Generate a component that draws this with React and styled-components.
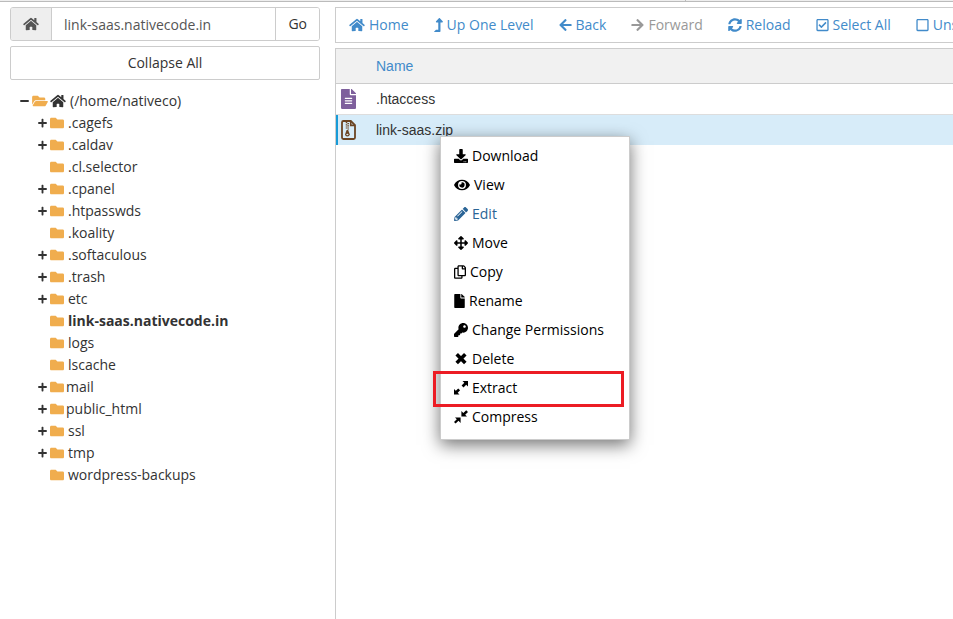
import React, { useState } from "react";
import styled, { createGlobalStyle } from "styled-components";
import {
  FaArrowLeft,
  FaArrowRight,
  FaArrowsAlt,
  FaDownload,
  FaEye,
  FaFile,
  FaFileAlt,
  FaFolder,
  FaFolderOpen,
  FaHome,
  FaKey,
  FaLevelUpAlt,
  FaMinus,
  FaPencilAlt,
  FaPlus,
  FaRegCheckSquare,
  FaRegCopy,
  FaRegSquare,
  FaSyncAlt,
} from "react-icons/fa";

const GlobalStyle = createGlobalStyle`
  * {
    box-sizing: border-box;
  }
  body {
    margin: 0;
    background: #fff;
    color: #333;
    font-family: "Open Sans", sans-serif;
    font-size: 14px;
    line-height: 20px;
    overflow: hidden;
  }
  button,
  input {
    font: inherit;
    color: inherit;
  }
`;

const PageStyled = styled.div`
  display: flex;
  flex-direction: column;
  height: 100vh;
`;

const Glyph = styled.i`
  display: block;
  flex: none;
  width: ${(props) => props.$width || 14}px;

  svg {
    display: block;
    width: 100%;
    height: ${(props) => props.$height || 14}px;
  }
`;

const TopStrip = styled.div`
  display: flex;
  flex: none;
  height: 2px;
  background: #eee;
  border-bottom: 1px solid #bbb;

  span {
    width: 72%;
    border-right: 1px solid #bbb;
  }
`;

const Columns = styled.div`
  display: grid;
  grid-template-columns: 310px minmax(0, 1fr);
  column-gap: 15px;
  flex: 1;
  padding: 5px 0 0 10px;
`;

const Sidebar = styled.aside`
  display: flex;
  flex-direction: column;
  gap: 5px;
`;

const PathForm = styled.form`
  display: flex;
  height: 34px;
  border: 1px solid #ccc;
  border-radius: 3px;
  overflow: hidden;

  label {
    display: flex;
    align-items: center;
    padding: 0 12px;
    background: #eee;
    color: #555;
    border-right: 1px solid #ccc;
  }
  input {
    flex: 1;
    min-width: 0;
    padding: 2px 12px 0;
    border: 0;
    color: #555;
    outline: none;
  }
  button {
    padding: 0 12px;
    border: 0;
    border-left: 1px solid #ccc;
    background: #fff;
  }
`;

const CollapseButton = styled.button`
  height: 34px;
  background: #fff;
  border: 1px solid #ccc;
  border-radius: 2px;
`;

const Tree = styled.ul`
  list-style: none;
  margin: 0;
  padding: 5px 0 0 8px;

  ul {
    list-style: none;
    margin: 0;
    padding: 0 0 0 18px;
  }
`;

const TreeRow = styled.div`
  display: flex;
  align-items: center;
  height: 22px;
  font-weight: ${(props) => (props.$current ? 700 : 400)};

  .folder {
    color: #f0ad4e;
  }
  .home {
    margin-left: 2px;
  }
  span {
    margin-left: ${(props) => (props.$tight ? 2 : 4)}px;
  }
`;

const Toggle = styled.button`
  display: flex;
  justify-content: center;
  width: 14px;
  padding: 0 2px 0 0;
  border: 0;
  background: none;
`;

const ToggleSpace = styled.i`
  width: 14px;
`;

const Content = styled.main`
  position: relative;
  display: flex;
  flex-direction: column;
  gap: 5px;
`;

const Toolbar = styled.nav`
  display: flex;
  align-items: center;
  gap: 25px;
  height: 36px;
  padding: 0 13px;
  border: 1px solid #ccc;
  border-right: 0;
  overflow: hidden;
`;

const ToolButton = styled.button`
  display: flex;
  align-items: center;
  gap: 4px;
  padding: 0;
  border: 0;
  background: none;
  white-space: nowrap;
  color: #428bca;

  &:disabled {
    color: #999;
  }
`;

const FileList = styled.div`
  flex: 1;
  border: 1px solid #ccc;
  border-width: 1px 0 0 1px;
`;

const FileTable = styled.table`
  width: 100%;
  border-collapse: separate;
  border-spacing: 0;
  font-family: "Liberation Sans", Arial, sans-serif;

  th {
    height: 35px;
    padding: 0;
    background: #f1f1f1;
    border-bottom: 1px solid #ccc;
    color: #428bca;
    font-weight: 400;
    text-align: left;
  }
  th:first-child,
  td:first-child {
    width: 40px;
  }
`;

const FileRow = styled.tr`
  td {
    height: ${(props) => (props.$selected ? 30 : 31)}px;
    padding: 0;
    background: ${(props) => (props.$selected ? "#d7ecf9" : "#fff")};
    border-bottom: ${(props) => (props.$selected ? "0" : "1px solid #ddd")};
  }
  td:first-child {
    padding-left: ${(props) => (props.$selected ? 3 : 5)}px;
    border-left: ${(props) => (props.$selected ? "2px solid #179bd7" : "0")};
    color: ${(props) => props.$color};
  }
`;

const ContextMenu = styled.ul`
  position: absolute;
  top: 129px;
  left: 105px;
  width: 190px;
  margin: 0;
  padding: 4px 0 8px;
  list-style: none;
  background: #fff;
  border: 1px solid #ccc;
  box-shadow: 0 5px 16px rgba(0, 0, 0, 0.55);

  li {
    position: relative;
  }
`;

const MenuButton = styled.button`
  display: flex;
  align-items: center;
  gap: 4px;
  width: 100%;
  height: 29px;
  padding: 0 13px;
  border: 0;
  background: none;
  color: ${(props) => (props.$active ? "#2a6496" : "#000")};
`;

const Highlight = styled.div`
  position: absolute;
  inset: -2px 5px -5px -8px;
  border: 3px solid #ec1c24;
  pointer-events: none;
`;

const RemoveIcon = () => (
  <svg viewBox="0 0 14 14" stroke="currentColor" strokeWidth="3.6">
    <path d="M2.7 2.3l8.6 8.6M11.3 2.3l-8.6 8.6" />
  </svg>
);

const ExtractIcon = () => (
  <svg viewBox="0 0 14 14" fill="currentColor">
    <path d="M8.5 0H14v5.5l-1.8-1.8-2.7 2.7-1.9-1.9 2.7-2.7z" />
    <path d="M5.5 13.5H0V8l1.8 1.8 2.4-2.4 1.9 1.9-2.4 2.4z" />
  </svg>
);

const CompressIcon = () => (
  <svg viewBox="0 0 14 14" fill="currentColor">
    <path d="M7.4 1v5.6H13l-1.8-1.8L14 2 12.2.2 9.3 3z" />
    <path d="M6.6 13V7.4H1l1.8 1.8L0 12l1.6 1.6 2.9-2.8z" />
  </svg>
);

const ZipIcon = () => (
  <svg viewBox="0 0 15 20" fill="none" stroke="currentColor">
    <path
      d="M2.4 1h7.4L14 5.2v12.4a1.4 1.4 0 0 1-1.4 1.4H2.4A1.4 1.4 0 0 1 1 17.600V2.400A1.400 1.400 0 0 1 2.400 1z"
      strokeWidth="1.8"
    />
    <path d="M9.700 1v4.400H14" strokeWidth="1.600" />
    <path d="M5.500 2v7M7.200 3v7" strokeWidth="1.500" strokeDasharray="1.200 1" />
    <path d="M5.600 10h1.600l1.500 4.200a2.300 2.300 0 1 1-4.600 0z" fill="currentColor" stroke="none" />
    <ellipse cx="6.400" cy="14.500" rx="1.100" ry=".8" fill="#d7ecf9" stroke="none" />
  </svg>
);

const folders = [
  { name: ".cagefs", children: true },
  { name: ".caldav", children: true },
  { name: ".cl.selector" },
  { name: ".cpanel", children: true },
  { name: ".htpasswds", children: true },
  { name: ".koality" },
  { name: ".softaculous", children: true },
  { name: ".trash", children: true },
  { name: "etc", children: true },
  { name: "link-saas.nativecode.in", current: true },
  { name: "logs" },
  { name: "lscache" },
  { name: "mail", children: true, tight: true },
  { name: "public_html", children: true, tight: true },
  { name: "ssl", children: true },
  { name: "tmp", children: true },
  { name: "wordpress-backups" },
];

const tools = [
  { name: "Home", icon: FaHome, width: 16 },
  { name: "Up One Level", icon: FaLevelUpAlt, width: 9 },
  { name: "Back", icon: FaArrowLeft, width: 13 },
  { name: "Forward", icon: FaArrowRight, width: 13, disabled: true },
  { name: "Reload", icon: FaSyncAlt },
  { name: "Select All", icon: FaRegCheckSquare, width: 13 },
  { name: "Unselect All", icon: FaRegSquare, width: 13 },
];

const menuItems = [
  { name: "Download", icon: FaDownload },
  { name: "View", icon: FaEye, width: 16 },
  { name: "Edit", icon: FaPencilAlt, active: true },
  { name: "Move", icon: FaArrowsAlt },
  { name: "Copy", icon: FaRegCopy, width: 12 },
  { name: "Rename", icon: FaFile, width: 11 },
  { name: "Change Permissions", icon: FaKey },
  { name: "Delete", icon: RemoveIcon },
  { name: "Extract", icon: ExtractIcon, highlight: true },
  { name: "Compress", icon: CompressIcon },
];

function FolderTree() {
  return (
    <Tree>
      <li>
        <TreeRow>
          <Toggle aria-label="Collapse home">
            <Glyph $width={9} $height={10}>
              <FaMinus />
            </Glyph>
          </Toggle>
          <Glyph className="folder" $width={16}>
            <FaFolderOpen />
          </Glyph>
          <Glyph className="home" $width={16}>
            <FaHome />
          </Glyph>
          <span>(/home/nativeco)</span>
        </TreeRow>
        <ul>
          {folders.map((folder) => (
            <li key={folder.name}>
              <TreeRow $current={folder.current} $tight={folder.tight}>
                {folder.children ? (
                  <Toggle aria-label={`Expand ${folder.name}`}>
                    <Glyph $width={9} $height={10}>
                      <FaPlus />
                    </Glyph>
                  </Toggle>
                ) : (
                  <ToggleSpace />
                )}
                <Glyph className="folder">
                  <FaFolder />
                </Glyph>
                <span>{folder.name}</span>
              </TreeRow>
            </li>
          ))}
        </ul>
      </li>
    </Tree>
  );
}

function FileMenu() {
  return (
    <ContextMenu>
      {menuItems.map(({ name, icon: Icon, width, active, highlight }) => (
        <li key={name}>
          <MenuButton $active={active}>
            <Glyph $width={width}>
              <Icon />
            </Glyph>
            {name}
          </MenuButton>
          {highlight && <Highlight />}
        </li>
      ))}
    </ContextMenu>
  );
}

function App() {
  const [path, setPath] = useState("link-saas.nativecode.in");

  return (
    <PageStyled>
      <GlobalStyle />
      <TopStrip>
        <span />
      </TopStrip>
      <Columns>
        <Sidebar>
          <PathForm onSubmit={(e) => e.preventDefault()}>
            <label htmlFor="path" aria-label="Path">
              <Glyph $width={16}>
                <FaHome />
              </Glyph>
            </label>
            <input
              id="path"
              type="text"
              value={path}
              onChange={(e) => setPath(e.target.value)}
            />
            <button type="submit">Go</button>
          </PathForm>
          <CollapseButton>Collapse All</CollapseButton>
          <FolderTree />
        </Sidebar>
        <Content>
          <Toolbar>
            {tools.map(({ name, icon: Icon, width, disabled }) => (
              <ToolButton key={name} disabled={disabled}>
                <Glyph $width={width}>
                  <Icon />
                </Glyph>
                {name}
              </ToolButton>
            ))}
          </Toolbar>
          <FileList>
            <FileTable>
              <thead>
                <tr>
                  <th />
                  <th>Name</th>
                </tr>
              </thead>
              <tbody>
                <FileRow $color="#7e5f9c">
                  <td>
                    <Glyph $width={15} $height={20}>
                      <FaFileAlt />
                    </Glyph>
                  </td>
                  <td>.htaccess</td>
                </FileRow>
                <FileRow $selected $color="#6b4423">
                  <td>
                    <Glyph $width={15} $height={20}>
                      <ZipIcon />
                    </Glyph>
                  </td>
                  <td>link-saas.zip</td>
                </FileRow>
              </tbody>
            </FileTable>
          </FileList>
          <FileMenu />
        </Content>
      </Columns>
    </PageStyled>
  );
}

export default App;
